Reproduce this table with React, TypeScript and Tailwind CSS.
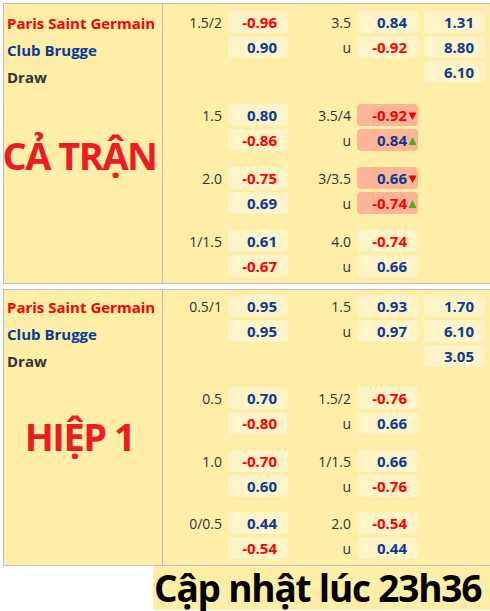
type Odd = { v: string; hl?: boolean; arrow?: "up" | "down" } | null;
type Row = [string, Odd, string, Odd, Odd];
type Group = { mt: string; rows: Row[] };

const o = (v: string, hl?: boolean, arrow?: "up" | "down"): Odd => ({ v, hl, arrow });

const fullMatch: Group[] = [
  {
    mt: "mt-[7px]",
    rows: [
      ["1.5/2", o("-0.96"), "3.5", o("0.84"), o("1.31")],
      ["", o("0.90"), "u", o("-0.92"), o("8.80")],
      ["", null, "", null, o("6.10")],
    ],
  },
  {
    mt: "mt-[21px]",
    rows: [
      ["1.5", o("0.80"), "3.5/4", o("-0.92", true, "down"), null],
      ["", o("-0.86"), "u", o("0.84", true, "up"), null],
    ],
  },
  {
    mt: "mt-[16px]",
    rows: [
      ["2.0", o("-0.75"), "3/3.5", o("0.66", true, "down"), null],
      ["", o("0.69"), "u", o("-0.74", true, "up"), null],
    ],
  },
  {
    mt: "mt-[16px]",
    rows: [
      ["1/1.5", o("0.61"), "4.0", o("-0.74"), null],
      ["", o("-0.67"), "u", o("0.66"), null],
    ],
  },
];

const firstHalf: Group[] = [
  {
    mt: "mt-[5px]",
    rows: [
      ["0.5/1", o("0.95"), "1.5", o("0.93"), o("1.70")],
      ["", o("0.95"), "u", o("0.97"), o("6.10")],
      ["", null, "", null, o("3.05")],
    ],
  },
  {
    mt: "mt-[20px]",
    rows: [
      ["0.5", o("0.70"), "1.5/2", o("-0.76"), null],
      ["", o("-0.80"), "u", o("0.66"), null],
    ],
  },
  {
    mt: "mt-[16px]",
    rows: [
      ["1.0", o("-0.70"), "1/1.5", o("0.66"), null],
      ["", o("0.60"), "u", o("-0.76"), null],
    ],
  },
  {
    mt: "mt-[15px]",
    rows: [
      ["0/0.5", o("0.44"), "2.0", o("-0.54"), null],
      ["", o("-0.54"), "u", o("0.44"), null],
    ],
  },
];

function Arrow({ dir }: { dir: "up" | "down" }) {
  return (
    <svg width="11" height="9" viewBox="0 0 11 9" className="shrink-0">
      {dir === "down" ? (
        <polygon points="1.5,1.5 9.5,1.5 5.5,9" fill="#ee0000" />
      ) : (
        <polygon points="1.5,9 9.5,9 5.5,1" fill="#4caf1a" />
      )}
    </svg>
  );
}

function Box({ odd, w }: { odd: Odd; w: string }) {
  if (!odd) return <div className={w} />;
  const neg = odd.v.startsWith("-");
  return (
    <div
      className={`${w} flex h-[22px] items-center justify-end rounded-[4px] ${
        odd.hl ? "bg-[#fdb596]" : "bg-[#fff4c8]"
      } ${odd.arrow ? "pr-0" : "pr-[11px]"}`}
    >
      <span className={`text-[15px] font-bold ${neg ? "text-[#ff0000]" : "text-[#0a3a98]"}`}>
        {odd.v}
      </span>
      {odd.arrow && <Arrow dir={odd.arrow} />}
    </div>
  );
}

function Label({ t, w }: { t: string; w: string }) {
  return <div className={`${w} pr-[6px] text-right text-[14px] text-[#333]`}>{t}</div>;
}

function Panel({
  groups,
  title,
  namesPt,
  titleMt,
}: {
  groups: Group[];
  title: string;
  namesPt: string;
  titleMt: string;
}) {
  return (
    <section className="flex border-y border-l border-[#bdbdbd] bg-[#ffeea8]">
      <div className="w-[159px] shrink-0 border-r border-[#bdbdbd]">
        <div className={`${namesPt} pl-[3px] text-[15px] font-bold leading-[27px]`}>
          <div className="text-[#ff0000]">Paris Saint Germain</div>
          <div className="text-[#0a3a98]">Club Brugge</div>
          <div className="text-[#333]">Draw</div>
        </div>
        <div
          className={`${titleMt} -ml-[6px] w-[163px] whitespace-nowrap text-center text-[38px] font-bold leading-[38px] tracking-[-1.5px] text-[#ed1c24]`}
        >
          {title}
        </div>
      </div>
      <div className="flex-1 pb-[6px]">
        {groups.map((g, gi) => (
          <div key={gi} className={`${g.mt} flex flex-col gap-[3px]`}>
            {g.rows.map((r, ri) => (
              <div key={ri} className="flex h-[22px] items-center">
                <Label t={r[0]} w="w-[65px]" />
                <Box odd={r[1]} w="w-[60px]" />
                <Label t={r[2]} w="w-[69px]" />
                <Box odd={r[3]} w="w-[61px]" />
                <div className="w-[6px]" />
                <Box odd={r[4]} w="w-[61px]" />
              </div>
            ))}
          </div>
        ))}
      </div>
    </section>
  );
}

export default function App() {
  return (
    <main className="h-[611px] w-[490px] overflow-hidden bg-white pl-[3px] pt-[3px] font-['Open_Sans',sans-serif]">
      <Panel groups={fullMatch} title="CẢ TRẬN" namesPt="pt-[6px]" titleMt="mt-[45px]" />
      <div className="h-[5px]" />
      <Panel groups={firstHalf} title="HIỆP 1" namesPt="pt-[4px]" titleMt="mt-[42px]" />
      <div className="-ml-[3px] flex h-[44px]">
        <div className="w-[153px] shrink-0 bg-white" />
        <div className="flex-1 whitespace-nowrap bg-[#ffeea8] pl-[1px] text-[37px] font-bold leading-[44px] tracking-[-1.2px] text-black">
          Cập nhật lúc 23h36
        </div>
      </div>
    </main>
  );
}
